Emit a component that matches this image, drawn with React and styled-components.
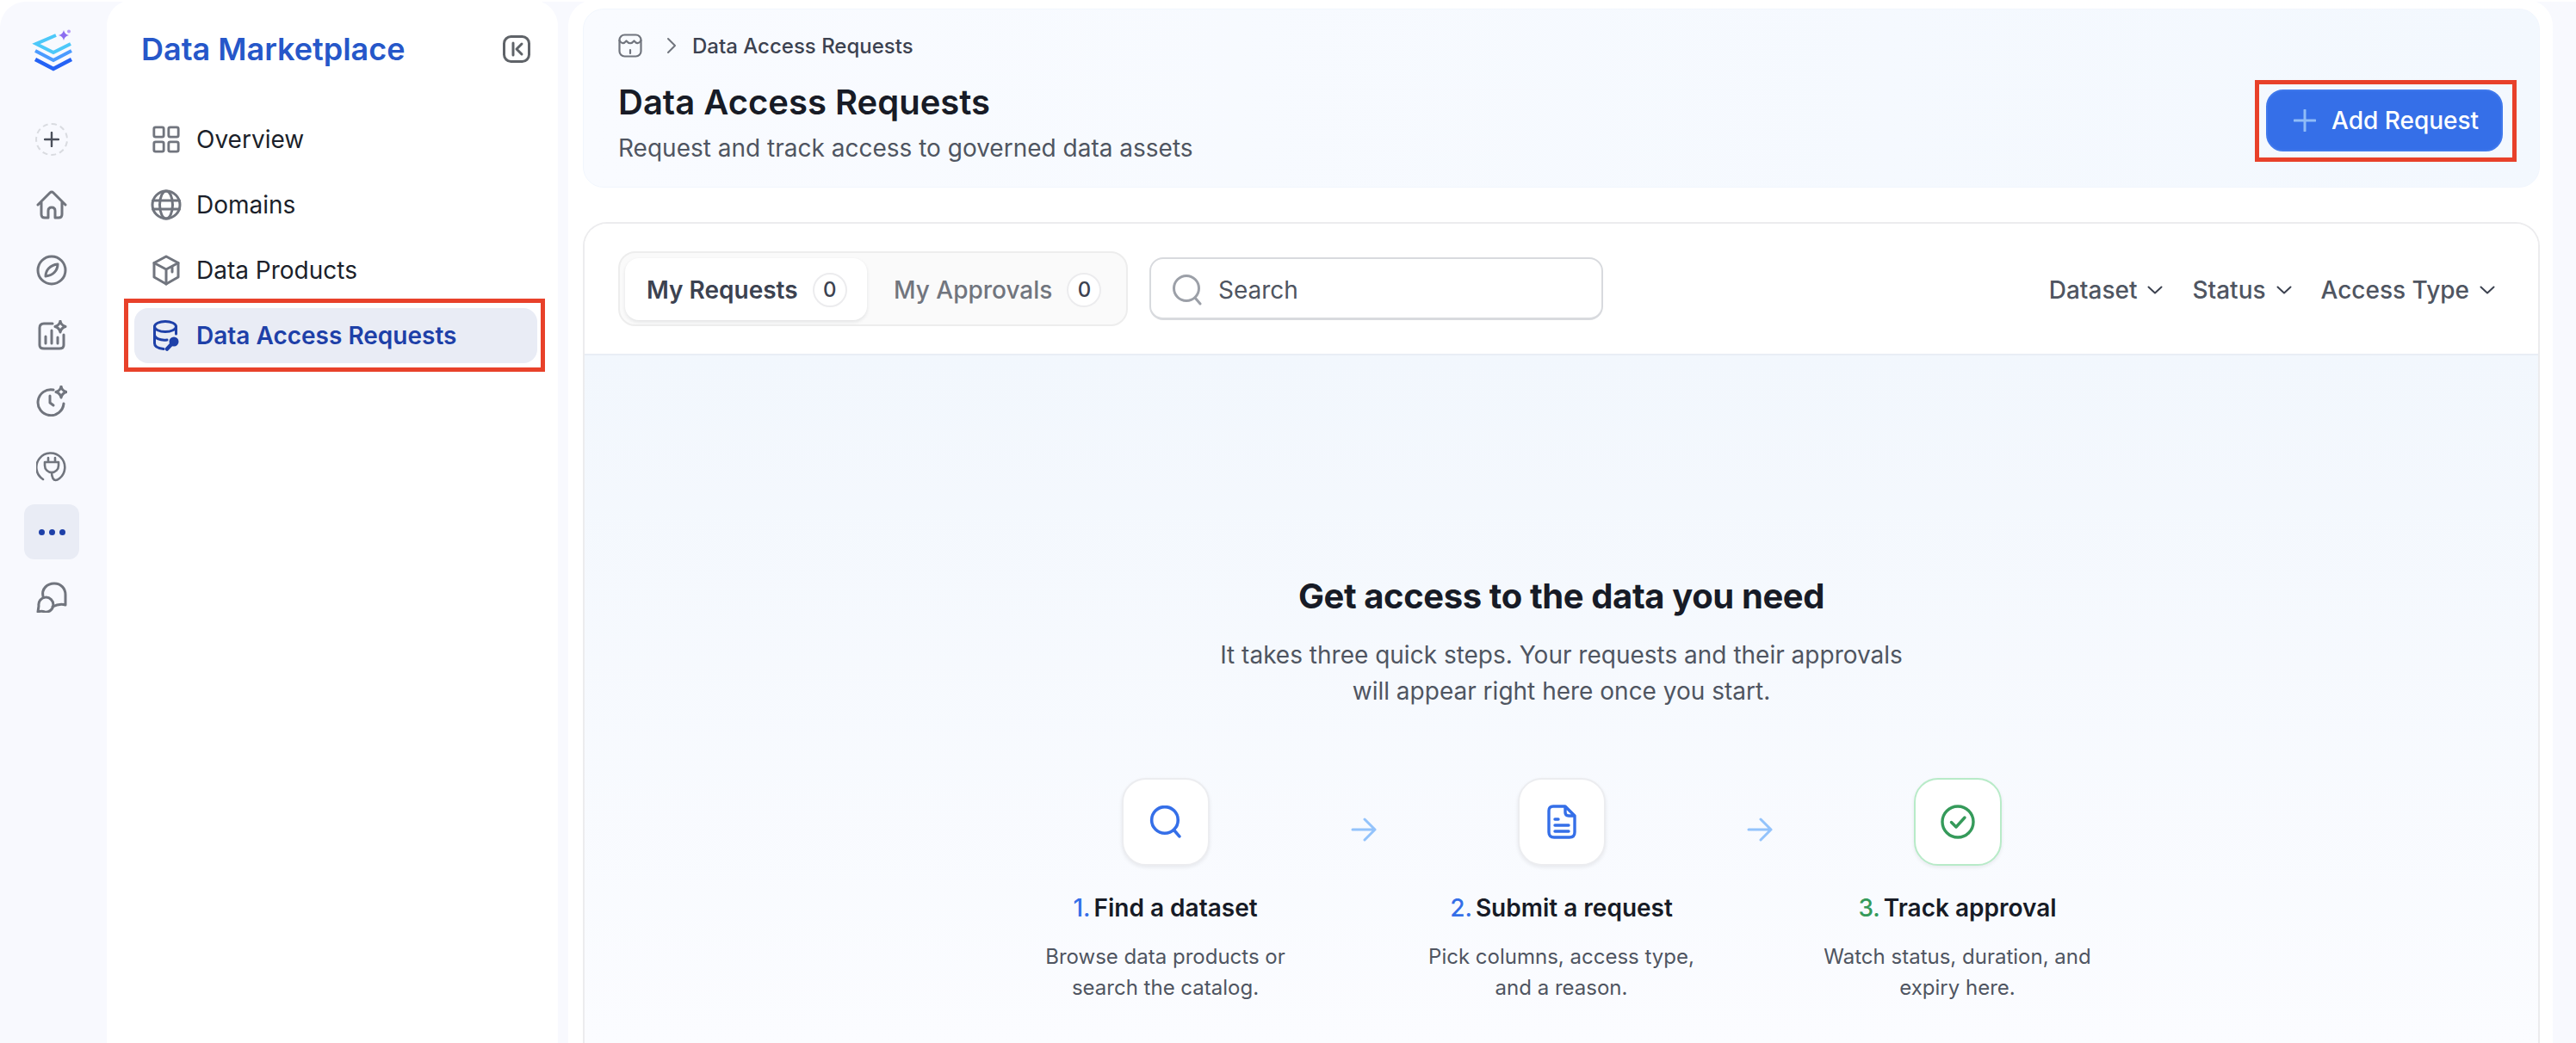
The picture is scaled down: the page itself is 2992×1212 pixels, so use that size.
import { Fragment } from "react";
import styled, { createGlobalStyle } from "styled-components";

const GlobalStyle = createGlobalStyle`
  html, body {
    margin: 0;
    padding: 0;
    background: #ffffff;
    font-family: "Inter", "Liberation Sans", sans-serif;
  }
  * { box-sizing: border-box; }
`;

const Frame = styled.div`
  display: flex;
  height: 1210px;
  margin-top: 2px;
  overflow: hidden;
  background: #f8f9fe;
  border-top-left-radius: 30px;
`;

/* icon rail */
const Rail = styled.nav`
  display: flex;
  flex-direction: column;
  align-items: center;
  flex: 0 0 124px;
  padding-right: 4px;
`;

const LogoBox = styled.div`
  display: flex;
  justify-content: center;
  height: 122px;
  padding-top: 32px;
`;

const RailItem = styled.div`
  display: flex;
  align-items: center;
  justify-content: center;
  height: 76px;
  color: #71757e;
`;

const RailActive = styled.div`
  display: flex;
  align-items: center;
  justify-content: center;
  gap: 5px;
  width: 64px;
  height: 64px;
  border-radius: 12px;
  background: #e9ecf5;
`;

const Dot = styled.span`
  width: 7px;
  height: 7px;
  border-radius: 50%;
  background: #1e40a8;
`;

const AddCircle = styled.div`
  display: flex;
  align-items: center;
  justify-content: center;
  width: 38px;
  height: 38px;
  border-radius: 50%;
  border: 2px dashed #d9dbe0;
  color: #4a4f5a;
`;

/* sidebar */
const Sidebar = styled.aside`
  flex: 0 0 524px;
  margin-top: -2px;
  padding: 0 24px 0 32px;
  background: #ffffff;
  border-radius: 30px 30px 0 0;
`;

const SideHeader = styled.div`
  display: flex;
  align-items: center;
  justify-content: space-between;
  height: 114px;
  margin-bottom: 16px;
  padding: 0 8px 0 8px;
`;

const SideTitle = styled.h2`
  margin: 0;
  color: #2657c9;
  font-size: 36px;
  font-weight: 600;
`;

const NavList = styled.div`
  display: flex;
  flex-direction: column;
  gap: 12px;
`;

const NavItem = styled.div`
  position: relative;
  display: flex;
  align-items: center;
  gap: 17px;
  height: 64px;
  padding-left: 19px;
  border-radius: 16px;
  background: ${(p) => (p.$active ? "#e9ecf5" : "transparent")};
  color: ${(p) => (p.$active ? "#1e40a8" : "#1b1f2a")};
  font-size: 28px;
  font-weight: ${(p) => (p.$active ? 600 : 400)};
`;

const NavIcon = styled.span`
  display: flex;
  align-items: center;
  justify-content: center;
  width: 36px;
  color: ${(p) => (p.$active ? "#1e40a8" : "#71757e")};
`;

const RedBox = styled.span`
  position: absolute;
  top: ${(p) => p.$t}px;
  right: ${(p) => p.$r}px;
  bottom: ${(p) => p.$b}px;
  left: ${(p) => p.$l}px;
  border: 5px solid #e8412a;
  pointer-events: none;
`;

/* main panel */
const Main = styled.main`
  display: flex;
  flex-direction: column;
  flex: 0 0 2305px;
  margin: -2px 0 0 12px;
  padding: 10px 15px 0 17px;
  background: #ffffff;
  border-radius: 30px 30px 0 0;
`;

const PageHeader = styled.header`
  display: flex;
  justify-content: space-between;
  flex: 0 0 208px;
  padding: 0 42px 0 40px;
  border: 1px solid #f1f6fd;
  border-radius: 24px;
  background: linear-gradient(90deg, #f9fbff 0%, #f3f8fe 100%);
`;

const HeaderText = styled.div`
  display: flex;
  flex-direction: column;
  padding-top: 28px;
`;

const Breadcrumb = styled.div`
  display: flex;
  align-items: center;
  height: 28px;
  color: #3c4250;
  font-size: 24px;
  font-weight: 500;
`;

const Crumb = styled.span`
  display: flex;
  margin-right: ${(p) => p.$gap}px;
  color: #71757e;
`;

const PageTitle = styled.h1`
  margin: 28px 0 0;
  color: #171b26;
  font-size: 40px;
  line-height: 48px;
  font-weight: 600;
`;

const PageSub = styled.p`
  margin: 12px 0 0;
  color: #4f5561;
  font-size: 28px;
  line-height: 34px;
`;

const AddButton = styled.button`
  position: relative;
  align-self: flex-end;
  display: flex;
  align-items: center;
  gap: 18px;
  width: 275px;
  height: 72px;
  margin-bottom: 41px;
  padding: 0 0 0 30px;
  border: 2px solid #4079ec;
  border-radius: 20px;
  background: #356fe8;
  color: #ffffff;
  font-family: inherit;
  font-size: 28px;
  font-weight: 500;
  white-space: nowrap;
`;

const AddGlyph = styled.span`
  display: flex;
  color: #8fbcf7;
`;

const Card = styled.section`
  display: flex;
  flex-direction: column;
  flex: 1;
  margin-top: 40px;
  border: 2px solid #ececee;
  border-bottom: none;
  border-radius: 28px 28px 0 0;
  overflow: hidden;
`;

const Toolbar = styled.div`
  display: flex;
  align-items: center;
  flex: 0 0 153px;
  padding: 1px 50px 1px 39px;
  border-bottom: 2px solid #e9eef5;
  background: #ffffff;
`;

const Tabs = styled.div`
  display: flex;
  align-items: center;
  width: 592px;
  height: 87px;
  padding: 0 6px;
  border: 2px solid #ededed;
  border-radius: 20px;
  background: #fafafa;
`;

const Tab = styled.div`
  display: flex;
  align-items: center;
  height: 72px;
  width: ${(p) => p.$w}px;
  padding: 2px 0 0 ${(p) => p.$pad}px;
  border-radius: 16px;
  background: ${(p) => (p.$active ? "#ffffff" : "transparent")};
  box-shadow: ${(p) => (p.$active ? "0 2px 4px rgba(20, 25, 40, 0.1)" : "none")};
  color: ${(p) => (p.$active ? "#3c4250" : "#71757e")};
  font-size: 28px;
  font-weight: ${(p) => (p.$active ? 600 : 500)};
`;

const Count = styled.span`
  display: flex;
  align-items: center;
  justify-content: center;
  width: 40px;
  height: 40px;
  margin-left: 17px;
  border: 2px solid #ececee;
  border-radius: 50%;
  background: #ffffff;
  color: #3c4250;
  font-size: 24px;
  font-weight: 500;
`;

const SearchBox = styled.div`
  display: flex;
  align-items: center;
  gap: 18px;
  width: 527px;
  height: 73px;
  margin-left: 25px;
  padding: 3px 0 0 24px;
  border: 2px solid #d8dade;
  border-bottom-width: 3px;
  border-radius: 16px;
  background: #ffffff;
  color: #4f5561;
  font-size: 28px;
`;

const SearchGlyph = styled.span`
  display: flex;
  color: #9ca0a8;
`;

const Filters = styled.div`
  display: flex;
  align-items: center;
  gap: 34px;
  margin-left: auto;
  padding-top: 2px;
`;

const Filter = styled.div`
  display: flex;
  align-items: center;
  gap: 12px;
  color: #4f5561;
  font-size: 28px;
  font-weight: 500;
`;

const FilterGlyph = styled.span`
  display: flex;
  color: #3c4250;
`;

const Empty = styled.div`
  display: flex;
  flex-direction: column;
  align-items: center;
  flex: 1;
  padding-top: 256px;
  background: linear-gradient(180deg, #f2f7fd 0%, #fbfcff 100%);
`;

const EmptyTitle = styled.h2`
  margin: 0;
  color: #171b26;
  font-size: 40px;
  line-height: 48px;
  font-weight: 700;
  letter-spacing: -0.4px;
`;

const EmptyText = styled.p`
  margin: 23px 0 0;
  color: #4f5561;
  font-size: 28px;
  line-height: 42px;
  text-align: center;
`;

const Steps = styled.div`
  display: grid;
  grid-template-columns: 340px 120px 340px 120px 340px;
  margin-top: 80px;
`;

const Step = styled.div`
  display: flex;
  flex-direction: column;
  align-items: center;
`;

const StepIcon = styled.div`
  display: flex;
  align-items: center;
  justify-content: center;
  width: 102px;
  height: 102px;
  border: 2px solid ${(p) => (p.$done ? "#b8ebc8" : "#ecedf0")};
  border-radius: 28px;
  background: #ffffff;
  box-shadow: 0 2px 4px rgba(20, 25, 40, 0.08);
  color: ${(p) => (p.$done ? "#359a5a" : "#356fe8")};
`;

const StepTitle = styled.div`
  margin-top: 32px;
  color: #171b26;
  font-size: 28px;
  line-height: 34px;
  font-weight: 600;
  white-space: nowrap;
`;

const StepNum = styled.span`
  margin-right: 4px;
  color: ${(p) => (p.$done ? "#359a5a" : "#356fe8")};
  font-weight: 500;
`;

const StepText = styled.p`
  margin: 22px 0 0;
  color: #4f5561;
  font-size: 24px;
  line-height: 36px;
  text-align: center;
`;

const Arrow = styled.div`
  display: flex;
  justify-content: center;
  padding-top: 46px;
  color: #93c3fb;
`;

const Svg = styled.svg`
  flex: none;
  fill: none;
  stroke: currentColor;
  stroke-linecap: round;
  stroke-linejoin: round;
`;

const icon = (d, box = 36, sw = 3) =>
  function PathIcon({ size = box }) {
    return (
      <Svg width={size} height={size} viewBox={`0 0 ${box} ${box}`} strokeWidth={sw}>
        {d}
      </Svg>
    );
  };

const HomeIcon = icon(
  <path d="M2 18 L16 4 Q18 2 20 4 L34 18 M6 15 V29 Q6 33 10 33 H14 V25 Q14 21 18 21 Q22 21 22 25 V33 H26 Q30 33 30 29 V15" />
);
const CompassIcon = icon(
  <>
    <circle cx="18" cy="18" r="16" />
    <path d="M25 11 C25 18 20 24 11 25 C11 18 16 12 25 11Z" />
  </>
);
const ChartIcon = icon(
  <>
    <path d="M19 4 H9 Q4 4 4 9 V29 Q4 33 9 33 H27 Q32 33 32 29 V17" />
    <path d="M11 27 V19 M18 27 V12 M25 27 V20" />
    <path d="M28 1 Q29 6 34 7.5 Q29 9 28 14 Q27 9 22 7.5 Q27 6 28 1Z" />
  </>
);
const ClockIcon = icon(
  <>
    <path d="M20 5 A15 15 0 1 0 32 21" />
    <path d="M16 12 V20 L20 23" />
    <path d="M29 1 Q30 6 35 7.5 Q30 9 29 14 Q28 9 23 7.5 Q28 6 29 1Z" />
  </>
);
const PlugIcon = icon(
  <>
    <path d="M8 33 A16.5 16.5 0 1 1 27 32 Q22 36 19.5 32 Q18 29 18 25" />
    <path d="M14 8 V13 M22 8 V13 M10 13 H26 V17 A8 8 0 0 1 10 17 Z" />
  </>,
  36,
  2.6
);
const ChatIcon = icon(
  <>
    <path d="M8 17 C6 8 13 2 21 2 C29 2 34 8 34 15 V27 Q27 25 19 29" />
    <path d="M2 35 L3 28 A8.5 8.5 0 1 1 10 35 Q6 33.5 2 35Z" />
  </>
);
const GridIcon = icon(
  <>
    <rect x="3" y="3" width="12" height="12" rx="2" />
    <rect x="21" y="3" width="12" height="12" rx="2" />
    <rect x="3" y="21" width="12" height="12" rx="2" />
    <rect x="21" y="21" width="12" height="12" rx="2" />
  </>
);
const GlobeIcon = icon(
  <>
    <circle cx="18" cy="18" r="16" />
    <ellipse cx="18" cy="18" rx="7.5" ry="16" />
    <path d="M2.5 13 H33.5 M2.5 23 H33.5" />
  </>
);
const CubeIcon = icon(
  <>
    <path d="M18 2 L32 9.5 V26 L18 34 L4 26 V9.5Z" />
    <path d="M4 9.5 L18 17 L32 9.5 M18 17 V34 M25 13.5 V20" />
  </>
);
const PlusIcon = ({ size = 18 }) => (
  <Svg width={size} height={size} viewBox="0 0 18 18" strokeWidth="2.4">
    <path d="M9 1 V17 M1 9 H17" />
  </Svg>
);
const CollapseIcon = () => (
  <Svg width="32" height="32" viewBox="0 0 32 32" strokeWidth="3" color="#5f6368">
    <rect x="1.5" y="1.5" width="29" height="29" rx="8" />
    <path d="M12 9 V23 M22 10 L16 16 L22 22" />
  </Svg>
);
const DbKeyIcon = () => (
  <Svg width="32" height="36" viewBox="0 0 32 36" strokeWidth="3">
    <ellipse cx="15" cy="7.5" rx="12.5" ry="6" />
    <path d="M2.5 7.5 V27 C2.5 31 8 33 13 33.5 M27.5 7.5 V16 M2.5 17.5 C3 21 9 24 17 23" />
    <circle cx="25" cy="25" r="5.5" fill="currentColor" stroke="none" />
    <path d="M23 27 L17 33.5" strokeWidth="4.5" />
  </Svg>
);
const StoreIcon = () => (
  <Svg width="28" height="28" viewBox="0 0 28 28" strokeWidth="2.2">
    <rect x="1.5" y="1.5" width="25" height="25" rx="6" />
    <path d="M1.5 8 Q5 14 9.5 8.5 Q14 14 18.5 8.5 Q23 14 26.5 8 M14 19 V23" />
  </Svg>
);
const ChevronRight = () => (
  <Svg width="12" height="20" viewBox="0 0 12 20" strokeWidth="2">
    <path d="M2 2 L10 10 L2 18" />
  </Svg>
);
const ChevronDown = () => (
  <Svg width="18" height="10" viewBox="0 0 18 10" strokeWidth="2">
    <path d="M1.5 1.5 L9 8.5 L16.5 1.5" />
  </Svg>
);
const SearchIcon = ({ size = 36, width = 3 }) => (
  <Svg width={size} height={size} viewBox="0 0 36 36" strokeWidth={width}>
    <circle cx="17" cy="16" r="14.5" />
    <path d="M27 27 L33 34" />
  </Svg>
);
const FileIcon = () => (
  <Svg width="34" height="40" viewBox="0 0 34 40" strokeWidth="3.4">
    <path d="M7 2 H21 L32 13 V32 Q32 38 26 38 H8 Q2 38 2 32 V7 Q2 2 7 2Z M21 2 V9 Q21 13 25 13 H32" />
    <path d="M9 17 H13 M9 24 H25 M9 31 H25" />
  </Svg>
);
const CheckCircleIcon = () => (
  <Svg width="40" height="40" viewBox="0 0 40 40" strokeWidth="3.4">
    <circle cx="20" cy="20" r="18" />
    <path d="M12.5 20.5 L18 26 L28 15" />
  </Svg>
);
const ArrowIcon = () => (
  <Svg width="30" height="28" viewBox="0 0 30 28" strokeWidth="3">
    <path d="M2 14 H28 M16 2 L28 14 L16 26" />
  </Svg>
);

const Logo = () => (
  <svg width="50" height="50" viewBox="0 0 50 50" fill="none">
    <path d="M30 7 L7 17 L27 27 L47 17" stroke="#4dc8f9" strokeWidth="4" />
    <path d="M6 25 L27 36 L48 25" stroke="#4b9bff" strokeWidth="4" />
    <path d="M6 35 L27 46 L48 35" stroke="#2563f5" strokeWidth="4.5" />
    <path d="M39 1 Q40 6 45 7 Q40 8 39 13 Q38 8 33 7 Q38 6 39 1Z" fill="#8b6cf0" />
    <circle cx="45" cy="2.5" r="2" fill="#b69cf5" />
  </svg>
);

const railIcons = [HomeIcon, CompassIcon, ChartIcon, ClockIcon, PlugIcon];

const navItems = [
  { label: "Overview", Icon: GridIcon, size: 34 },
  { label: "Domains", Icon: GlobeIcon, size: 36 },
  { label: "Data Products", Icon: CubeIcon, size: 36 },
];

const steps = [
  {
    num: "1.",
    title: "Find a dataset",
    lines: ["Browse data products or", "search the catalog."],
    icon: <SearchIcon size={38} width={3.4} />,
  },
  {
    num: "2.",
    title: "Submit a request",
    lines: ["Pick columns, access type,", "and a reason."],
    icon: <FileIcon />,
  },
  {
    num: "3.",
    title: "Track approval",
    lines: ["Watch status, duration, and", "expiry here."],
    icon: <CheckCircleIcon />,
    done: true,
  },
];

function App() {
  return (
    <>
      <GlobalStyle />
      <Frame>
        <Rail>
          <LogoBox>
            <Logo />
          </LogoBox>
          <RailItem>
            <AddCircle>
              <PlusIcon />
            </AddCircle>
          </RailItem>
          {railIcons.map((RailIcon, i) => (
            <RailItem key={i}>
              <RailIcon />
            </RailItem>
          ))}
          <RailItem>
            <RailActive>
              <Dot />
              <Dot />
              <Dot />
            </RailActive>
          </RailItem>
          <RailItem>
            <ChatIcon />
          </RailItem>
        </Rail>

        <Sidebar>
          <SideHeader>
            <SideTitle>Data Marketplace</SideTitle>
            <CollapseIcon />
          </SideHeader>
          <NavList>
            {navItems.map(({ label, Icon, size }) => (
              <NavItem key={label}>
                <NavIcon>
                  <Icon size={size} />
                </NavIcon>
                {label}
              </NavItem>
            ))}
            <NavItem $active>
              <NavIcon $active>
                <DbKeyIcon />
              </NavIcon>
              Data Access Requests
              <RedBox $t={-11} $r={-9} $b={-10} $l={-12} />
            </NavItem>
          </NavList>
        </Sidebar>

        <Main>
          <PageHeader>
            <HeaderText>
              <Breadcrumb>
                <Crumb $gap={28}>
                  <StoreIcon />
                </Crumb>
                <Crumb $gap={18}>
                  <ChevronRight />
                </Crumb>
                Data Access Requests
              </Breadcrumb>
              <PageTitle>Data Access Requests</PageTitle>
              <PageSub>Request and track access to governed data assets</PageSub>
            </HeaderText>
            <AddButton>
              <AddGlyph>
                <Svg width="26" height="26" viewBox="0 0 26 26" strokeWidth="3">
                  <path d="M13 1 V25 M1 13 H25" />
                </Svg>
              </AddGlyph>
              Add Request
              <RedBox $t={-13} $r={-18} $b={-14} $l={-15} />
            </AddButton>
          </PageHeader>

          <Card>
            <Toolbar>
              <Tabs>
                <Tab $active $w={281} $pad={25}>
                  My Requests
                  <Count>0</Count>
                </Tab>
                <Tab $w={295} $pad={31}>
                  My Approvals
                  <Count>0</Count>
                </Tab>
              </Tabs>
              <SearchBox>
                <SearchGlyph>
                  <SearchIcon />
                </SearchGlyph>
                Search
              </SearchBox>
              <Filters>
                {["Dataset", "Status", "Access Type"].map((f) => (
                  <Filter key={f}>
                    {f}
                    <FilterGlyph>
                      <ChevronDown />
                    </FilterGlyph>
                  </Filter>
                ))}
              </Filters>
            </Toolbar>

            <Empty>
              <EmptyTitle>Get access to the data you need</EmptyTitle>
              <EmptyText>
                It takes three quick steps. Your requests and their approvals
                <br />
                will appear right here once you start.
              </EmptyText>
              <Steps>
                {steps.map((s, i) => (
                  <Fragment key={s.num}>
                    {i > 0 && (
                      <Arrow>
                        <ArrowIcon />
                      </Arrow>
                    )}
                    <Step>
                      <StepIcon $done={s.done}>{s.icon}</StepIcon>
                      <StepTitle>
                        <StepNum $done={s.done}>{s.num}</StepNum>
                        {s.title}
                      </StepTitle>
                      <StepText>
                        {s.lines[0]}
                        <br />
                        {s.lines[1]}
                      </StepText>
                    </Step>
                  </Fragment>
                ))}
              </Steps>
            </Empty>
          </Card>
        </Main>
      </Frame>
    </>
  );
}

export default App;
